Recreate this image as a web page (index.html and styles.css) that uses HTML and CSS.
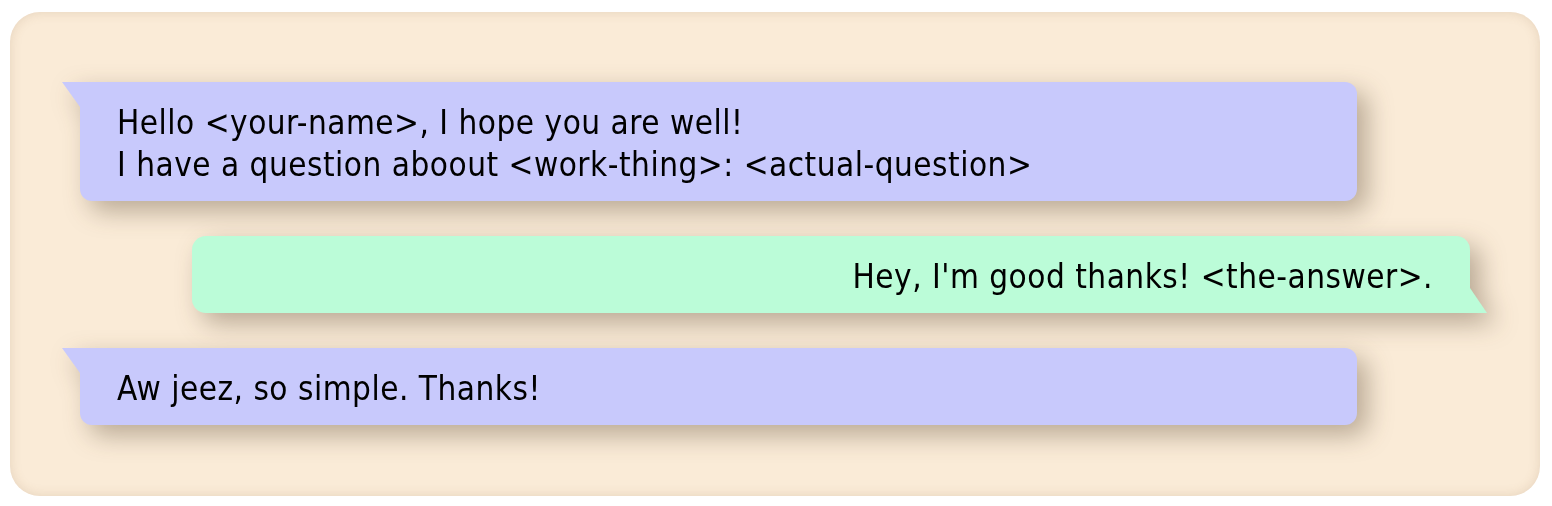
FILE: index.html
```html
<!DOCTYPE html>
<html lang="en">
<head>
<meta charset="utf-8">
<title>Chat</title>
<link rel="stylesheet" href="styles.css">
</head>
<body>
<div class="chat">
  <div class="msg msg-in">
    <div class="bubble">Hello &lt;your-name&gt;, I hope you are well!<br>I have a question aboout &lt;work-thing&gt;: &lt;actual-question&gt;</div>
  </div>
  <div class="msg msg-out">
    <div class="bubble">Hey, I'm good thanks! &lt;the-answer&gt;.</div>
  </div>
  <div class="msg msg-in">
    <div class="bubble">Aw jeez, so simple. Thanks!</div>
  </div>
</div>
</body>
</html>
```

FILE: styles.css
```css
html, body {
  background: #ffffff;
}
body {
  margin: 12px 12px 10px 10px;
  font-family: "DejaVu Sans Condensed", "DejaVu Sans", sans-serif;
}
.chat {
  background: #faebd7;
  border-radius: 30px;
  box-shadow: inset 0 0 12px rgba(140, 100, 60, 0.18);
  padding: 70px 53px 71px 52px;
  display: flex;
  flex-direction: column;
  gap: 35px;
  height: 484px;
  box-sizing: border-box;
}
.msg {
  filter: drop-shadow(10px 10px 13px rgba(60, 40, 20, 0.34));
}
.bubble {
  position: relative;
  font-size: 33px;
  letter-spacing: 0.5px;
  line-height: 42px;
  color: #000;
  padding: 19.5px 37px 15.5px;
}
.msg-in .bubble {
  background: #c8c9fc;
  margin: 0 130px 0 18px;
  border-radius: 0 12px 12px 12px;
}
.msg-in .bubble::before {
  content: "";
  position: absolute;
  left: -18px;
  top: 0;
  width: 18px;
  height: 25px;
  background: #c8c9fc;
  clip-path: polygon(0 0, 100% 0, 100% 100%);
}
.msg-out .bubble {
  background: #bbfcd8;
  margin: 0 17px 0 130px;
  border-radius: 14px 14px 0 14px;
  text-align: right;
}
.msg-out .bubble::after {
  content: "";
  position: absolute;
  right: -17px;
  bottom: 0;
  width: 17px;
  height: 25px;
  background: #bbfcd8;
  clip-path: polygon(0 0, 100% 100%, 0 100%);
}
```
